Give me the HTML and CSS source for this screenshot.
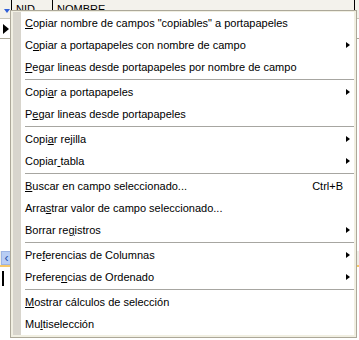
FILE: index.html
```html
<!DOCTYPE html>
<html lang="es">
<head>
<meta charset="utf-8">
<link rel="stylesheet" href="styles.css">
</head>
<body>
<div class="grid">
  <div class="hdr">
    <div class="hcell ind"></div>
    <div class="hcell nid">NID</div>
    <div class="hcell nom">NOMBRE</div>
    <div class="hcell rest"></div>
  </div>
  <div class="row cur">
    <div class="ind"><span class="tri"></span></div>
    <div class="cells"></div>
  </div>
  <div class="body">
    <div class="ind"></div>
    <div class="cells"></div>
  </div>
  <div class="scroll">
    <div class="sbtn">&#8249;</div>
    <div class="strack"></div>
  </div>
  <div class="foot">
    <div class="fbar"></div>
  </div>
  <span class="filter"></span>
</div>

<div class="menu">
  <div class="list">
    <div class="item"><span class="lbl"><u>C</u>opiar nombre de campos "copiables" a portapapeles</span></div>
    <div class="item sub"><span class="lbl">C<u>o</u>piar a portapapeles con nombre de campo</span></div>
    <div class="item"><span class="lbl"><u>P</u>egar lineas desde portapapeles por nombre de campo</span></div>
    <div class="sep"></div>
    <div class="item sub"><span class="lbl">Copi<u>a</u>r a portapapeles</span></div>
    <div class="item"><span class="lbl">P<u>e</u>gar lineas desde portapapeles</span></div>
    <div class="sep"></div>
    <div class="item sub"><span class="lbl">Copi<u>a</u>r rejilla</span></div>
    <div class="item sub"><span class="lbl">Copiar<u> </u>tabla</span></div>
    <div class="sep"></div>
    <div class="item"><span class="lbl"><u>B</u>uscar en campo seleccionado...</span><span class="key">Ctrl+B</span></div>
    <div class="item"><span class="lbl">Arra<u>s</u>trar valor de campo seleccionado...</span></div>
    <div class="item sub"><span class="lbl">Borrar re<u>g</u>istros</span></div>
    <div class="sep"></div>
    <div class="item sub"><span class="lbl">Pre<u>f</u>erencias de Columnas</span></div>
    <div class="item sub"><span class="lbl">Prefere<u>n</u>cias de Ordenado</span></div>
    <div class="sep"></div>
    <div class="item"><span class="lbl"><u>M</u>ostrar cálculos de selección</span></div>
    <div class="item"><span class="lbl">Mu<u>l</u>tiselección</span></div>
  </div>
</div>
</body>
</html>
```

FILE: styles.css
```css
html, body {
  margin: 0;
  padding: 0;
}
body {
  width: 359px;
  height: 340px;
  overflow: hidden;
  position: relative;
  background: #fff;
  font-family: "Liberation Sans", Arial, sans-serif;
  font-size: 11px;
  color: #000;
}
.grid {
  width: 359px;
  height: 340px;
  display: flex;
  flex-direction: column;
  position: relative;
}
.hdr {
  height: 19px;
  flex: none;
  display: flex;
  background: #f3f2ec;
  border-bottom: 1px solid #c9c7ba;
  box-sizing: border-box;
}
.hcell {
  border-right: 1px solid #000;
  padding: 3px 0 0 4px;
  box-sizing: border-box;
  line-height: 13px;
}
.hcell.ind { width: 12px; padding: 0; }
.hcell.nid { width: 41px; }
.hcell.nom { width: 302px; }
.hcell.rest { flex: 1; border-right: 0; }
.row.cur {
  height: 19px;
  flex: none;
  display: flex;
  border-bottom: 1px solid #aca899;
}
.row .ind, .body .ind {
  width: 11px;
  border-right: 1px solid #aca899;
  display: flex;
  align-items: center;
}
.tri {
  display: block;
  width: 0;
  height: 0;
  margin-left: 3px;
  border-top: 5px solid transparent;
  border-bottom: 5px solid transparent;
  border-left: 6px solid #000;
}
.cells { flex: 1; }
.body {
  flex: none;
  display: flex;
  height: 212px;
}
.scroll {
  height: 14px;
  flex: none;
  display: flex;
  background: #f0efe8;
  border-bottom: 2px solid #f6c86a;
}
.sbtn {
  width: 9px;
  margin-left: 1px;
  background: #b8cdf4;
  color: #2a4fa8;
  font-size: 12px;
  line-height: 13px;
  text-align: center;
  border: 1px solid #9db4e4;
}
.strack { flex: 1; }
.foot {
  flex: 1;
  display: flex;
  padding: 4px 0 0 2px;
}
.fbar {
  width: 2px;
  height: 15px;
  background: #000;
}
.filter {
  position: absolute;
  left: 4px;
  top: 9px;
  width: 0;
  height: 0;
  border-left: 3px solid transparent;
  border-right: 3px solid transparent;
  border-top: 4px solid #2f5fd8;
}

.menu {
  position: absolute;
  left: 10px;
  top: 10px;
  width: 347px;
  box-sizing: border-box;
  border: 1px solid #aca899;
  background: #f1efe2;
  padding: 1px 2px 2px 2px;
}
.list {
  background: #fff;
  border-left: 8px solid #d8d5cd;
  display: flex;
  flex-direction: column;
}
.item {
  height: 22px;
  display: flex;
  align-items: center;
  padding: 0 20px 0 4px;
  position: relative;
  white-space: nowrap;
}
.item u {
  text-decoration: underline;
  text-underline-offset: 1px;
}
.lbl { flex: 1; }
.key {
  margin-right: -9px;
}
.item.sub::after {
  content: "";
  position: absolute;
  right: 4px;
  top: 8px;
  width: 0;
  height: 0;
  border-top: 3.5px solid transparent;
  border-bottom: 3.5px solid transparent;
  border-left: 4px solid #000;
}
.sep {
  height: 3px;
  margin-left: 4px;
  display: flex;
  align-items: center;
}
.sep::before {
  content: "";
  display: block;
  flex: 1;
  height: 1px;
  background: #a7a6a1;
}
```
